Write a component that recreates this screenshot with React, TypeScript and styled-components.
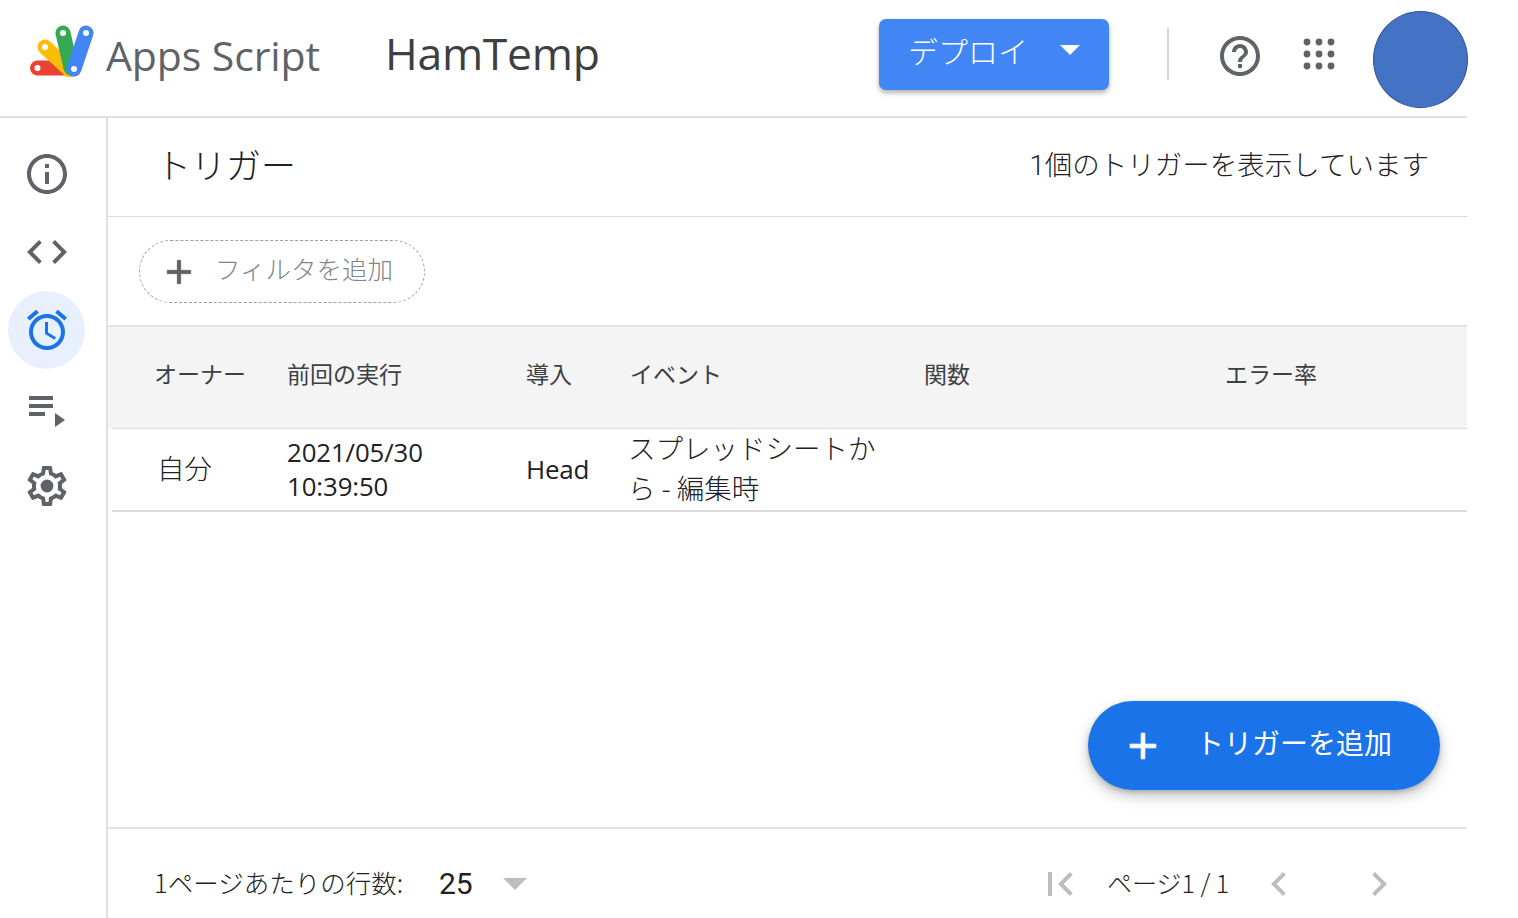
import React from "react";
import styled, { createGlobalStyle } from "styled-components";

const GlobalStyle = createGlobalStyle`
  html, body {
    margin: 0;
    background: #ffffff;
    font-family: "Roboto", "Noto Sans CJK JP", sans-serif;
    color: #3c4043;
  }
  * {
    box-sizing: border-box;
  }
`;

const Page = styled.div`
  width: 1467px;
  height: 918px;
  display: flex;
  flex-direction: column;
`;

const Header = styled.header`
  height: 118px;
  flex: none;
  display: flex;
  align-items: center;
  padding: 0 0 0 30px;
  border-bottom: 2px solid #e0e0e0;
`;

const Logo = styled.svg`
  width: 64px;
  height: 52px;
  flex: none;
  margin-top: -14px;
`;

const ProductName = styled.span`
  font-family: "Open Sans", "Roboto", sans-serif;
  font-size: 41px;
  letter-spacing: -0.1px;
  color: #5f6368;
  margin-left: 12px;
  margin-top: -6px;
  width: 280px;
  flex: none;
`;

const ProjectName = styled.span`
  font-family: "Open Sans", "Roboto", sans-serif;
  font-size: 44.5px;
  letter-spacing: -0.3px;
  color: #3c4043;
  margin-top: -12px;
  margin-left: -1px;
  width: 494px;
  flex: none;
`;

const DeployButton = styled.button`
  width: 230px;
  height: 71px;
  flex: none;
  margin-top: -8px;
  border: none;
  border-radius: 7px;
  background: #4285f4;
  color: #ffffff;
  display: flex;
  align-items: center;
  padding: 0 29px 8px 29px;
  font-family: "Noto Sans CJK JP", sans-serif;
  font-weight: 300;
  font-size: 30px;
  justify-content: space-between;
  box-shadow: 0 3px 5px rgba(60, 64, 67, 0.4);
`;

const Caret = styled.span<{ $color: string; $size: number }>`
  width: 0;
  height: 0;
  border-left: ${(p) => p.$size}px solid transparent;
  border-right: ${(p) => p.$size}px solid transparent;
  border-top: ${(p) => p.$size}px solid ${(p) => p.$color};
`;

const Separator = styled.div`
  width: 2px;
  height: 52px;
  flex: none;
  margin: -8px 0 0 58px;
  background: #d5d7da;
`;

const HelpIcon = styled.svg`
  width: 48px;
  height: 48px;
  flex: none;
  margin: -4px 0 0 47px;
  fill: #5f6368;
`;

const AppsIcon = styled.svg`
  width: 34px;
  height: 34px;
  flex: none;
  margin: -8px 0 0 38px;
  fill: #5f6368;
`;

const Avatar = styled.div`
  width: 95px;
  height: 97px;
  flex: none;
  margin: 2px 0 0 37px;
  border-radius: 50%;
  background: #4472c4;
  border: 1px solid #2f528f;
`;

const Body = styled.div`
  flex: 1;
  min-height: 0;
  display: flex;
`;

const Sidebar = styled.nav`
  width: 108px;
  flex: none;
  padding: 17px 0 0 8px;
  border-right: 2px solid #e0e0e0;
  display: flex;
  flex-direction: column;
`;

const SideButton = styled.div<{ $active?: boolean }>`
  width: 77px;
  height: 78px;
  border-radius: 50%;
  display: flex;
  align-items: center;
  justify-content: center;
  background: ${(p) => (p.$active ? "#e8f0fe" : "transparent")};
  svg {
    width: 48px;
    height: 48px;
    flex: none;
    fill: ${(p) => (p.$active ? "#1a73e8" : "#5f6368")};
  }
`;

const Main = styled.main`
  flex: 1;
  min-width: 0;
  position: relative;
  display: flex;
  flex-direction: column;
`;

const TitleRow = styled.div`
  height: 99px;
  flex: none;
  display: flex;
  align-items: center;
  justify-content: space-between;
  padding: 0 38px 8px 48px;
  border-bottom: 1px solid #dadce0;
`;

const Title = styled.h1`
  margin: 0;
  font-family: "Noto Sans CJK JP", sans-serif;
  font-weight: 300;
  font-size: 35px;
  color: #202124;
`;

const Count = styled.span`
  font-family: "Roboto", "Noto Sans CJK JP", sans-serif;
  font-weight: 300;
  font-size: 27.5px;
  color: #202124;
`;

const FilterRow = styled.div`
  height: 108px;
  flex: none;
  padding: 23px 0 0 31px;
`;

const FilterChip = styled.div`
  width: 286px;
  height: 63px;
  border: 1px dashed #9aa0a6;
  border-radius: 32px;
  display: flex;
  align-items: center;
  gap: 16px;
  padding: 0 0 0 19px;
  font-family: "Noto Sans CJK JP", sans-serif;
  font-weight: 300;
  font-size: 25.5px;
  color: #80868b;
  span {
    margin-top: -8px;
  }
`;

const PlusIcon = styled.svg<{ $color: string; $size: number }>`
  width: ${(p) => p.$size}px;
  height: ${(p) => p.$size}px;
  flex: none;
  fill: ${(p) => p.$color};
  stroke: ${(p) => p.$color};
  stroke-width: 0.5;
`;

const HeadRow = styled.div`
  height: 103px;
  flex: none;
  display: grid;
  grid-template-columns: 133px 239px 104px 294px 301px 1fr;
  align-items: center;
  padding: 0 0 10px 46px;
  background: #f4f4f4;
  border-top: 2px solid #e4e4e6;
  font-family: "Noto Sans CJK JP", sans-serif;
  font-weight: 400;
  font-size: 23px;
  color: #3c4043;
`;

const DataRow = styled.div`
  height: 84px;
  flex: none;
  margin-left: 4px;
  display: grid;
  grid-template-columns: 133px 239px 104px 294px 301px 1fr;
  align-items: center;
  padding: 0 0 0 42px;
  border-top: 1px solid #dadce0;
  border-bottom: 2px solid #dadce0;
  font-family: "Open Sans", "Noto Sans CJK JP", sans-serif;
  font-size: 27px;
  color: #3c4043;
`;

const OwnerCell = styled.span`
  padding-left: 3px;
  margin-top: -6px;
  font-family: "Noto Sans CJK JP", sans-serif;
  font-weight: 300;
  font-size: 27.5px;
  color: #202124;
`;

const DateCell = styled.span`
  font-family: "Open Sans", sans-serif;
  font-size: 25.8px;
  line-height: 34px;
  letter-spacing: -0.1px;
  color: #202124;
  margin-top: -2px;
`;

const PlainCell = styled.span`
  font-size: 26px;
  letter-spacing: -0.2px;
  color: #202124;
  margin-top: -2px;
`;

const EventCell = styled.span`
  font-family: "Noto Sans CJK JP", sans-serif;
  font-weight: 300;
  font-size: 27.5px;
  line-height: 40px;
  margin: -6px 0 0 -2px;
  width: 256px;
  color: #202124;
`;

const Spacer = styled.div`
  flex: 1;
`;

const Fab = styled.button`
  position: absolute;
  left: 980px;
  top: 583px;
  width: 352px;
  height: 89px;
  border: none;
  border-radius: 45px;
  background: #1a73e8;
  color: #ffffff;
  display: flex;
  align-items: center;
  gap: 31px;
  padding: 0 0 0 33px;
  font-family: "Noto Sans CJK JP", sans-serif;
  font-weight: 400;
  font-size: 28px;
  box-shadow: 0 6px 14px rgba(60, 64, 67, 0.3), 0 2px 4px rgba(60, 64, 67, 0.25);
  span {
    margin-top: -8px;
  }
`;

const Footer = styled.footer`
  height: 91px;
  flex: none;
  border-top: 2px solid #e4e4e8;
  display: flex;
  align-items: center;
  padding: 20px 0 0 46px;
  font-family: "Noto Sans CJK JP", sans-serif;
  font-weight: 300;
  font-size: 25.5px;
  color: #202124;
`;

const RowsLabel = styled.span`
  width: 285px;
  flex: none;
  margin-top: -4px;
`;

const RowsValue = styled.span`
  width: 64px;
  flex: none;
  font-family: "Roboto", sans-serif;
  font-weight: 400;
  font-size: 30px;
`;

const PagerIcon = styled.svg<{ $gap: number }>`
  width: 48px;
  height: 48px;
  flex: none;
  margin-left: ${(p) => p.$gap}px;
  fill: #bdbdbd;
`;

const PageLabel = styled.span`
  width: 148px;
  flex: none;
  margin: -4px 0 0 23px;
  font-size: 25px;
`;

const PLUS = "M19 13h-6v6h-2v-6H5v-2h6V5h2v6h6v2z";
const CHEVRON_LEFT = "M15.41 7.41L14 6l-6 6 6 6 1.41-1.41L10.83 12z";
const CHEVRON_RIGHT = "M8.59 16.59L10 18l6-6-6-6-1.41 1.41L13.17 12z";

const navIcons = [
  <path key="info" d="M11 7h2v2h-2zm0 4h2v6h-2zm1-9C6.48 2 2 6.48 2 12s4.48 10 10 10 10-4.48 10-10S17.52 2 12 2zm0 18c-4.41 0-8-3.59-8-8s3.59-8 8-8 8 3.59 8 8-3.59 8-8 8z" />,
  <path key="code" d="M9.4 16.6L4.8 12l4.6-4.6L8 6l-6 6 6 6 1.4-1.4zm5.2 0l4.6-4.6-4.6-4.6L16 6l6 6-6 6-1.4-1.4z" />,
  <path key="alarm" d="M22 5.72l-4.6-3.86-1.29 1.53 4.6 3.86L22 5.72zM7.88 3.39L6.6 1.86 2 5.71l1.29 1.53 4.59-3.85zM12.5 8H11v6l4.75 2.85.75-1.23-4-2.37V8zM12 4c-4.97 0-9 4.03-9 9s4.02 9 9 9c4.97 0 9-4.03 9-9s-4.03-9-9-9zm0 16c-3.87 0-7-3.13-7-7s3.13-7 7-7 7 3.13 7 7-3.13 7-7 7z" />,
  <path key="runs" d="M3 6h12v2H3zm0 4h12v2H3zm0 4h8v2H3zm13 .5v7l5-3.5z" />,
  <g key="settings">
    <path d="M19.43 12.98c.04-.32.07-.64.07-.98 0-.34-.03-.66-.07-.98l2.11-1.65c.19-.15.24-.42.12-.64l-2-3.46c-.09-.16-.26-.25-.44-.25-.06 0-.12.01-.17.03l-2.49 1c-.52-.4-1.08-.73-1.69-.98l-.38-2.65C14.46 2.18 14.25 2 14 2h-4c-.25 0-.46.18-.49.42l-.38 2.65c-.61.25-1.17.59-1.69.98l-2.49-1c-.06-.02-.12-.03-.18-.03-.17 0-.34.09-.43.25l-2 3.46c-.13.22-.07.49.12.64l2.11 1.65c-.04.32-.07.65-.07.98 0 .33.03.66.07.98l-2.11 1.65c-.19.15-.24.42-.12.64l2 3.46c.09.16.26.25.44.25.06 0 .12-.01.17-.03l2.49-1c.52.4 1.08.73 1.69.98l.38 2.65c.03.24.24.42.49.42h4c.25 0 .46-.18.49-.42l.38-2.65c.61-.25 1.17-.59 1.69-.98l2.49 1c.06.02.12.03.18.03.17 0 .34-.09.43-.25l2-3.46c.12-.22.07-.49-.12-.64l-2.11-1.65zm-1.98-1.71c.04.31.05.52.05.73 0 .21-.02.43-.05.73l-.14 1.13.89.7 1.08.84-.7 1.21-1.27-.51-1.04-.42-.9.68c-.43.32-.84.56-1.25.73l-1.06.43-.16 1.13-.2 1.35h-1.4l-.19-1.35-.16-1.13-1.06-.43c-.43-.18-.83-.41-1.23-.71l-.91-.7-1.06.43-1.27.51-.7-1.21 1.08-.84.89-.7-.14-1.13c-.03-.31-.05-.54-.05-.74s.02-.43.05-.73l.14-1.13-.89-.7-1.08-.84.7-1.21 1.27.51 1.04.42.9-.68c.43-.32.84-.56 1.25-.73l1.06-.43.16-1.13.2-1.35h1.39l.19 1.35.16 1.13 1.06.43c.43.18.83.41 1.23.71l.91.7 1.06-.43 1.27-.51.7 1.21-1.07.85-.89.7.14 1.13z" />
    <circle cx="12" cy="12" r="3.2" />
  </g>,
];

const appDots = [6, 12, 18].flatMap((y) => [6, 12, 18].map((x) => ({ x, y })));

const headers = ["オーナー", "前回の実行", "導入", "イベント", "関数", "エラー率"];

const App: React.FC = () => {
  return (
    <Page>
      <GlobalStyle />
      <Header>
        <Logo viewBox="30 27 64 52">
          <g fill="none" strokeLinecap="round" strokeWidth="15">
            <path d="M37.5 70H72" stroke="#ea4335" />
            <path d="M45 49L70 72" stroke="#fbbc04" />
            <path d="M63 35L71 70" stroke="#34a853" />
            <path d="M86 35L74 71" stroke="#4285f4" />
          </g>
          <g fill="#ffffff">
            <circle cx="37.5" cy="70" r="3" />
            <circle cx="45" cy="49" r="3" />
            <circle cx="63" cy="35" r="3" />
            <circle cx="86" cy="35" r="3" />
            <circle cx="74" cy="71" r="3" />
          </g>
        </Logo>
        <ProductName>Apps Script</ProductName>
        <ProjectName>HamTemp</ProjectName>
        <DeployButton>
          デプロイ
          <Caret $color="#ffffff" $size={10} />
        </DeployButton>
        <Separator />
        <HelpIcon viewBox="0 0 24 24">
          <path d="M11 18h2v-2h-2v2zm1-16C6.48 2 2 6.48 2 12s4.48 10 10 10 10-4.48 10-10S17.52 2 12 2zm0 18c-4.41 0-8-3.59-8-8s3.59-8 8-8 8 3.59 8 8-3.59 8-8 8zm0-14c-2.21 0-4 1.79-4 4h2c0-1.1.9-2 2-2s2 .9 2 2c0 2-3 1.75-3 5h2c0-2.25 3-2.5 3-5 0-2.21-1.79-4-4-4z" />
        </HelpIcon>
        <AppsIcon viewBox="3.5 3.5 17 17">
          {appDots.map((dot) => (
            <circle key={`${dot.x}-${dot.y}`} cx={dot.x} cy={dot.y} r="1.7" />
          ))}
        </AppsIcon>
        <Avatar />
      </Header>
      <Body>
        <Sidebar>
          {navIcons.map((icon, index) => (
            <SideButton key={index} $active={index === 2}>
              <svg viewBox="0 0 24 24">{icon}</svg>
            </SideButton>
          ))}
        </Sidebar>
        <Main>
          <TitleRow>
            <Title>トリガー</Title>
            <Count>1個のトリガーを表示しています</Count>
          </TitleRow>
          <FilterRow>
            <FilterChip>
              <PlusIcon viewBox="0 0 24 24" $color="#5f6368" $size={40}>
                <path d={PLUS} />
              </PlusIcon>
              <span>フィルタを追加</span>
            </FilterChip>
          </FilterRow>
          <HeadRow>
            {headers.map((label) => (
              <span key={label}>{label}</span>
            ))}
          </HeadRow>
          <DataRow>
            <OwnerCell>自分</OwnerCell>
            <DateCell>
              2021/05/30
              <br />
              10:39:50
            </DateCell>
            <PlainCell>Head</PlainCell>
            <EventCell>スプレッドシートから - 編集時</EventCell>
          </DataRow>
          <Spacer />
          <Fab>
            <PlusIcon viewBox="0 0 24 24" $color="#ffffff" $size={44}>
              <path d={PLUS} />
            </PlusIcon>
            <span>トリガーを追加</span>
          </Fab>
          <Footer>
            <RowsLabel>1ページあたりの行数:</RowsLabel>
            <RowsValue>25</RowsValue>
            <Caret $color="#bdbdbd" $size={12} />
            <PagerIcon viewBox="0 0 24 24" $gap={509}>
              <path d="M6 6h2v12H6z" />
              <path d={CHEVRON_LEFT} transform="translate(3 0)" />
            </PagerIcon>
            <PageLabel>ページ1 / 1</PageLabel>
            <PagerIcon viewBox="0 0 24 24" $gap={0}>
              <path d={CHEVRON_LEFT} />
            </PagerIcon>
            <PagerIcon viewBox="0 0 24 24" $gap={52}>
              <path d={CHEVRON_RIGHT} />
            </PagerIcon>
          </Footer>
        </Main>
      </Body>
    </Page>
  );
};

export default App;
